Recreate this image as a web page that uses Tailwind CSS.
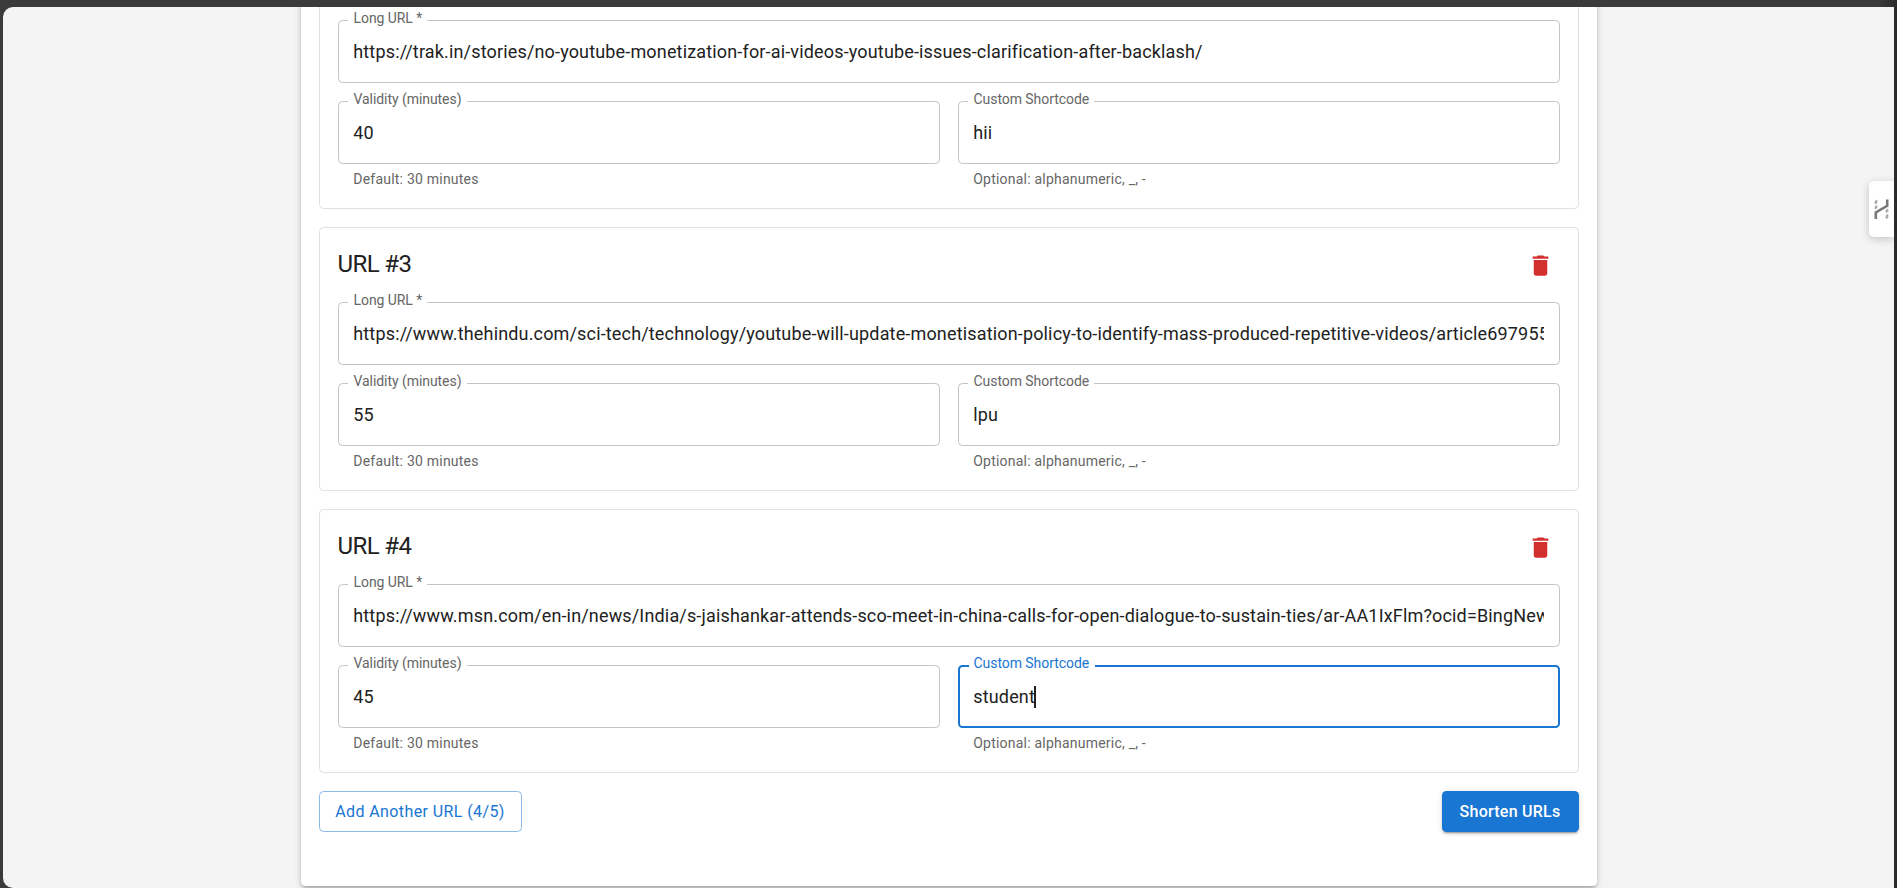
<!DOCTYPE html>
<html lang="en">
<head>
<meta charset="utf-8">
<title>URL Shortener</title>
<script src="https://cdn.jsdelivr.net/npm/@tailwindcss/browser@4"></script>
</head>
<body class="h-[888px] overflow-hidden bg-linear-to-r from-[#3b3b3b] from-99% to-[#2a2a2a] pt-[7px] pl-[3px] pr-[3px] font-[Roboto,sans-serif] text-[#212121]">
<svg class="hidden">
  <symbol id="trash" viewBox="0 0 24 24"><path d="M6 19c0 1.1.9 2 2 2h8c1.1 0 2-.9 2-2V7H6v12zM19 4h-3.5l-1-1h-5l-1 1H5v2h14V4z"/></symbol>
</svg>
<div class="relative flex h-[881px] flex-col items-center justify-end overflow-hidden rounded-l-[10px] bg-[#f4f4f4] pb-[2px]">
  <main class="flex w-[1296px] shrink-0 flex-col gap-[18px] rounded-[4.5px] bg-white px-[18px] pb-[54px] shadow-[0_3px_3px_-2px_rgba(0,0,0,0.2),0_3px_4px_0_rgba(0,0,0,0.14),0_1px_9px_0_rgba(0,0,0,0.12)]">

    <section class="flex h-[264px] flex-col rounded-[4.5px] border border-[#e0e0e0] px-[18px] pt-[18px]">
      <div class="flex h-[38px] items-center justify-between pr-[6px]">
        <h6 class="pb-[3px] text-[24px] leading-[36px] tracking-[-0.6px]">URL #2</h6>
        <svg class="size-[27px] fill-[#d32f2f]"><use href="#trash"/></svg>
      </div>
      <div class="relative mt-[18px] flex h-[63px] shrink-0 items-center rounded-[4.5px] border border-[#c4c4c4] px-[14.75px]">
        <label class="absolute -top-[13px] left-[9px] w-[79px] bg-white pl-[6px] text-[14px] leading-[20px] tracking-[-0.06px] whitespace-nowrap text-[#666]">Long URL *</label>
        <div class="w-full overflow-hidden text-[18px] leading-[26px] tracking-[0.16px] whitespace-nowrap">https://trak.in/stories/no-youtube-monetization-for-ai-videos-youtube-issues-clarification-after-backlash/</div>
      </div>
      <div class="mt-[18px] grid grid-cols-2 gap-[18px]">
        <div>
          <div class="relative flex h-[63px] items-center rounded-[4.5px] border border-[#c4c4c4] px-[14.75px]">
            <label class="absolute -top-[13px] left-[9px] w-[119px] bg-white pl-[6px] text-[14px] leading-[20px] tracking-[-0.06px] whitespace-nowrap text-[#666]">Validity (minutes)</label>
            <div class="text-[18px] leading-[26px] tracking-[0.16px]">40</div>
          </div>
          <p class="mt-[4px] pl-[15.75px] text-[14px] leading-[22px] tracking-[0.22px] text-[#666]">Default: 30 minutes</p>
        </div>
        <div>
          <div class="relative flex h-[63px] items-center rounded-[4.5px] border border-[#c4c4c4] px-[14.75px]">
            <label class="absolute -top-[13px] left-[9px] w-[126px] bg-white pl-[6px] text-[14px] leading-[20px] tracking-[-0.06px] whitespace-nowrap text-[#666]">Custom Shortcode</label>
            <div class="text-[18px] leading-[26px] tracking-[0.16px]">hii</div>
          </div>
          <p class="mt-[4px] pl-[15.75px] text-[14px] leading-[22px] tracking-[0.22px] text-[#666]">Optional: alphanumeric, _, -</p>
        </div>
      </div>
    </section>

    <section class="flex h-[264px] flex-col rounded-[4.5px] border border-[#e0e0e0] px-[18px] pt-[18px]">
      <div class="flex h-[38px] items-center justify-between pr-[6px]">
        <h6 class="pb-[3px] text-[24px] leading-[36px] tracking-[-0.6px]">URL #3</h6>
        <svg class="size-[27px] fill-[#d32f2f]"><use href="#trash"/></svg>
      </div>
      <div class="relative mt-[18px] flex h-[63px] shrink-0 items-center rounded-[4.5px] border border-[#c4c4c4] px-[14.75px]">
        <label class="absolute -top-[13px] left-[9px] w-[79px] bg-white pl-[6px] text-[14px] leading-[20px] tracking-[-0.06px] whitespace-nowrap text-[#666]">Long URL *</label>
        <div class="w-full overflow-hidden text-[18px] leading-[26px] tracking-[0.16px] whitespace-nowrap">https://www.thehindu.com/sci-tech/technology/youtube-will-update-monetisation-policy-to-identify-mass-produced-repetitive-videos/article697955</div>
      </div>
      <div class="mt-[18px] grid grid-cols-2 gap-[18px]">
        <div>
          <div class="relative flex h-[63px] items-center rounded-[4.5px] border border-[#c4c4c4] px-[14.75px]">
            <label class="absolute -top-[13px] left-[9px] w-[119px] bg-white pl-[6px] text-[14px] leading-[20px] tracking-[-0.06px] whitespace-nowrap text-[#666]">Validity (minutes)</label>
            <div class="text-[18px] leading-[26px] tracking-[0.16px]">55</div>
          </div>
          <p class="mt-[4px] pl-[15.75px] text-[14px] leading-[22px] tracking-[0.22px] text-[#666]">Default: 30 minutes</p>
        </div>
        <div>
          <div class="relative flex h-[63px] items-center rounded-[4.5px] border border-[#c4c4c4] px-[14.75px]">
            <label class="absolute -top-[13px] left-[9px] w-[126px] bg-white pl-[6px] text-[14px] leading-[20px] tracking-[-0.06px] whitespace-nowrap text-[#666]">Custom Shortcode</label>
            <div class="text-[18px] leading-[26px] tracking-[0.16px]">lpu</div>
          </div>
          <p class="mt-[4px] pl-[15.75px] text-[14px] leading-[22px] tracking-[0.22px] text-[#666]">Optional: alphanumeric, _, -</p>
        </div>
      </div>
    </section>

    <section class="flex h-[264px] flex-col rounded-[4.5px] border border-[#e0e0e0] px-[18px] pt-[18px]">
      <div class="flex h-[38px] items-center justify-between pr-[6px]">
        <h6 class="pb-[3px] text-[24px] leading-[36px] tracking-[-0.6px]">URL #4</h6>
        <svg class="size-[27px] fill-[#d32f2f]"><use href="#trash"/></svg>
      </div>
      <div class="relative mt-[18px] flex h-[63px] shrink-0 items-center rounded-[4.5px] border border-[#c4c4c4] px-[14.75px]">
        <label class="absolute -top-[13px] left-[9px] w-[79px] bg-white pl-[6px] text-[14px] leading-[20px] tracking-[-0.06px] whitespace-nowrap text-[#666]">Long URL *</label>
        <div class="w-full overflow-hidden text-[18px] leading-[26px] tracking-[0.16px] whitespace-nowrap">https://www.msn.com/en-in/news/India/s-jaishankar-attends-sco-meet-in-china-calls-for-open-dialogue-to-sustain-ties/ar-AA1IxFlm?ocid=BingNews</div>
      </div>
      <div class="mt-[18px] grid grid-cols-2 gap-[18px]">
        <div>
          <div class="relative flex h-[63px] items-center rounded-[4.5px] border border-[#c4c4c4] px-[14.75px]">
            <label class="absolute -top-[13px] left-[9px] w-[119px] bg-white pl-[6px] text-[14px] leading-[20px] tracking-[-0.06px] whitespace-nowrap text-[#666]">Validity (minutes)</label>
            <div class="text-[18px] leading-[26px] tracking-[0.16px]">45</div>
          </div>
          <p class="mt-[4px] pl-[15.75px] text-[14px] leading-[22px] tracking-[0.22px] text-[#666]">Default: 30 minutes</p>
        </div>
        <div>
          <div class="relative flex h-[63px] items-center rounded-[4.5px] border-2 border-[#1976d2] px-[13.75px]">
            <label class="absolute -top-[14px] left-[9px] w-[126px] bg-white pl-[5px] text-[14px] leading-[20px] tracking-[-0.06px] whitespace-nowrap text-[#1976d2]">Custom Shortcode</label>
            <div class="text-[18px] leading-[26px] tracking-[0.16px]">student</div>
            <span class="-ml-px h-[22px] w-[2px] bg-[#212121]"></span>
          </div>
          <p class="mt-[4px] pl-[15.75px] text-[14px] leading-[22px] tracking-[0.22px] text-[#666]">Optional: alphanumeric, _, -</p>
        </div>
      </div>
    </section>

    <div class="flex justify-between">
      <button class="h-[41px] w-[203px] rounded-[4.5px] border border-[#8cbae8] text-[16px] leading-[27px] tracking-[0.4px] text-[#1976d2]">Add Another URL (4/5)</button>
      <button class="h-[41px] w-[137px] rounded-[4.5px] bg-[#1976d2] text-[16px] leading-[27px] font-medium tracking-[0.25px] text-white shadow-[0_3px_1px_-2px_rgba(0,0,0,0.2),0_2px_2px_0_rgba(0,0,0,0.14),0_1px_6px_0_rgba(0,0,0,0.12)]">Shorten URLs</button>
    </div>
  </main>

  <aside class="absolute top-[174px] right-0 flex h-[56px] w-[25px] items-center rounded-l-[5px] bg-white pl-[5px] shadow-[0_2px_8px_rgba(0,0,0,0.2)]">
    <svg class="h-[20px] w-[15px]" viewBox="0 0 15 20" fill="none">
      <path d="M1.8 20V13.4L13.2 6.8V0.5" stroke="#777" stroke-width="2.6"/>
      <path d="M1 2.2L3 1V4L1 5ZM1 7.5L3 6.5V9L1 10ZM12 11L14 10V12.5L12 13.5ZM12 16.5L14 15.5V18.8L12 19.5Z" fill="#aaa" stroke="#aaa" stroke-width=".7"/>
    </svg>
  </aside>
</div>
</body>
</html>
